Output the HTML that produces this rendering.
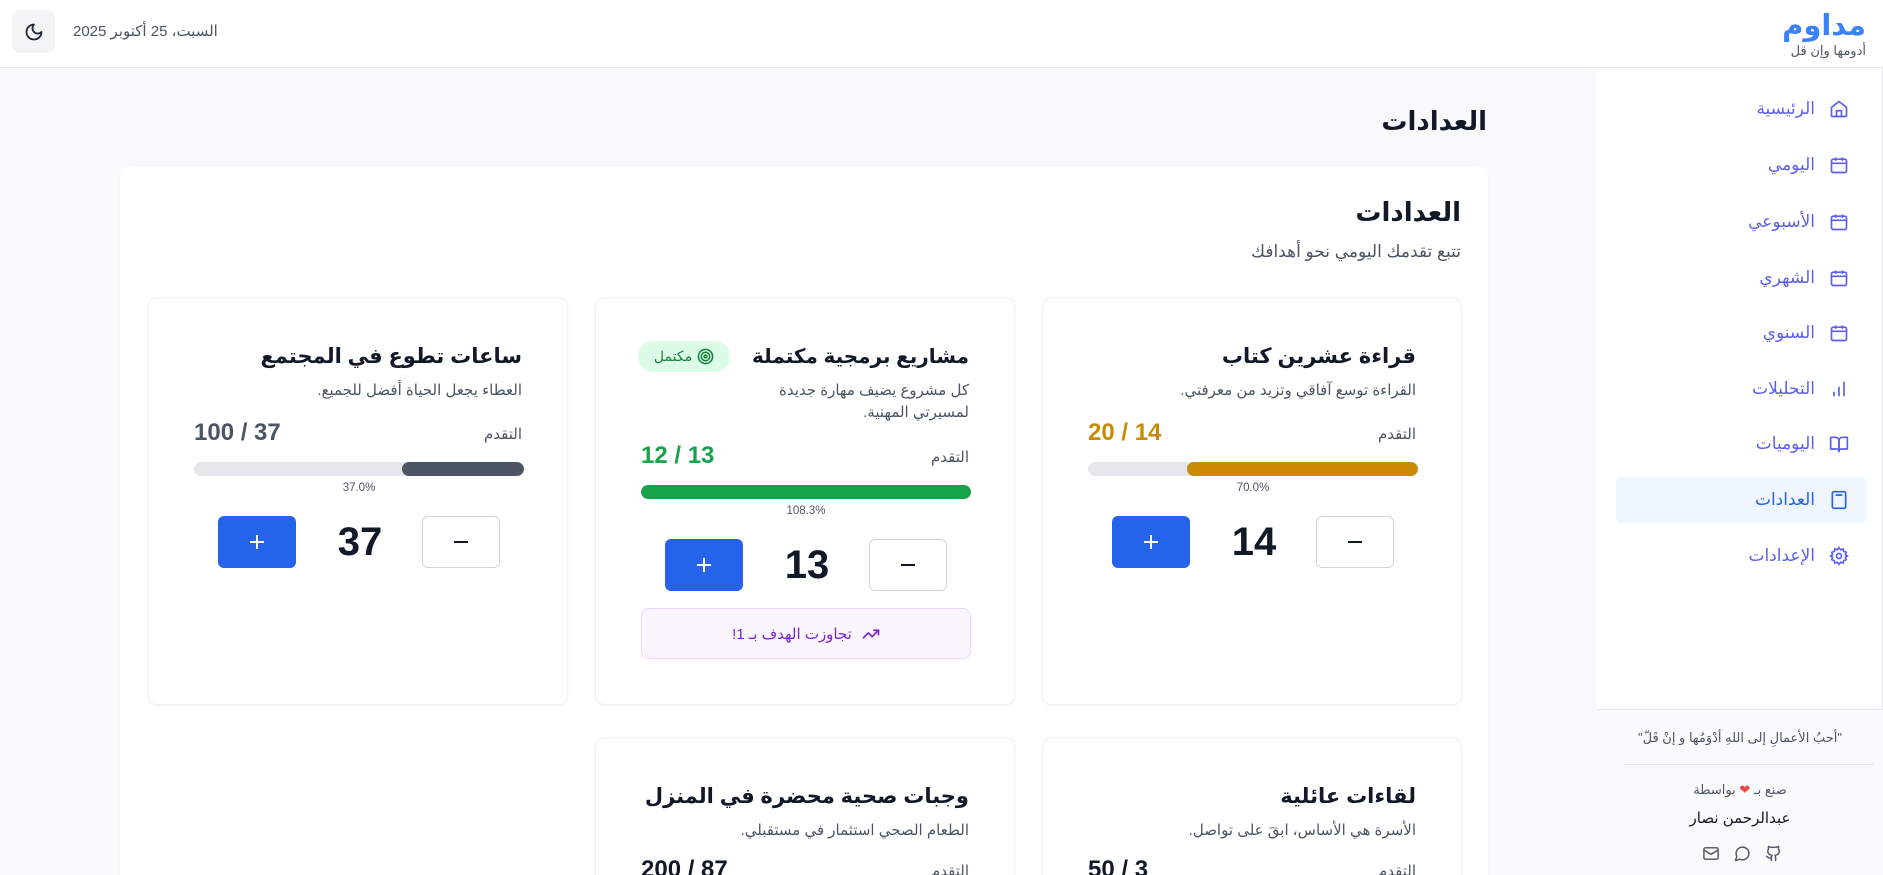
<!DOCTYPE html>
<html lang="ar" dir="rtl"><head><meta charset="utf-8"><style>
*{box-sizing:border-box;margin:0;padding:0}
html,body{width:1883px;height:875px;overflow:hidden}
body{background:#f8f9fb;font-family:"Liberation Sans","DejaVu Sans",sans-serif;color:#111827;position:relative}
.hdr{position:absolute;left:0;top:0;width:1883px;height:68px;background:#fff;border-bottom:1px solid #e5e7eb}
.side{position:absolute;left:1597px;top:68px;width:286px;height:807px;background:#fff;border-right:1px solid #e5e7eb}
.abs{position:absolute}
.nav{position:absolute;left:19px;width:251px;height:46px;border-radius:6px;color:#5b5fef;font-size:17px;display:flex;align-items:center;justify-content:flex-start;padding-right:18px;gap:14px}
.nav svg{width:20px;height:20px;flex:none}
.nav.act{background:#eff6ff;color:#2563eb}
.big{position:absolute;left:120px;top:167px;width:1368px;height:900px;background:#fff;border-radius:12px;box-shadow:0 1px 2px rgba(0,0,0,.04)}
.card{position:absolute;width:420px;height:408px;background:#fff;border:1px solid #f1f2f4;border-radius:10px;box-shadow:0 1px 3px rgba(0,0,0,.05)}
.card .t{position:absolute;right:45px;top:44px;font-size:21px;font-weight:bold;line-height:30px;white-space:nowrap}
.card .d{position:absolute;right:45px;top:82px;font-size:15px;color:#4b5563;line-height:22px;width:330px}
.card .l{position:absolute;right:45px;font-size:15px;color:#4b5563}
.card .v{position:absolute;left:45px;font-size:24px;font-weight:bold;direction:ltr}
.card .bar{position:absolute;left:45px;width:330px;height:14px;border-radius:7px;background:#e5e7eb;overflow:hidden}
.card .bar i{position:absolute;right:0;top:0;bottom:0;border-radius:7px}
.card .p{position:absolute;left:0;width:420px;text-align:center;font-size:11.5px;color:#4b5563}
.btn{position:absolute;width:78px;height:52px;border-radius:6px;display:flex;align-items:center;justify-content:center}
.plus{left:69px;background:#2563eb}
.minus{left:273px;background:#fff;border:1px solid #d1d5db}
.num{position:absolute;left:160px;width:102px;text-align:center;font-size:40px;font-weight:bold;line-height:52px}
</style></head><body>
<div class="hdr">
 <div class="abs" style="left:12px;top:10px;width:43px;height:43px;background:#f3f4f6;border-radius:8px;display:flex;align-items:center;justify-content:center">
  <svg width="20" height="20" viewBox="0 0 24 24" fill="none" stroke="#1f2937" stroke-width="2.2" stroke-linecap="round" stroke-linejoin="round"><path d="M12 3a6 6 0 0 0 9 9 9 9 0 1 1-9-9Z"/></svg>
 </div>
 <div class="abs" style="left:73px;top:22px;font-size:15px;color:#4b5563;white-space:nowrap">السبت، 25 أكتوبر 2025</div>
 <div class="abs" style="right:17px;top:8px;font-size:29px;font-weight:bold;color:#3b82f6;line-height:36px">مداوم</div>
 <div class="abs" style="right:17px;top:43px;font-size:13px;color:#4b5563">أدومها وإن قل</div>
</div>
<div class="abs" style="right:396px;top:106px;font-size:26px;font-weight:bold">العدادات</div>

<div class="big">
 <div class="abs" style="right:27px;top:30px;font-size:26px;font-weight:bold">العدادات</div>
 <div class="abs" style="right:27px;top:75px;font-size:17px;color:#4b5563">تتبع تقدمك اليومي نحو أهدافك</div>
</div>

<!-- card 1 -->
<div class="card" style="left:1042px;top:297px">
 <div class="t">قراءة عشرين كتاب</div>
 <div class="d">القراءة توسع آفاقي وتزيد من معرفتي.</div>
 <div class="l" style="top:127px">التقدم</div>
 <div class="v" style="top:121px;color:#ca8a04">20 / 14</div>
 <div class="bar" style="top:164px"><i style="width:70%;background:#ca8a04"></i></div>
 <div class="p" style="top:184px">70.0%</div>
 <div class="btn plus" style="top:218px"><svg width="18" height="18" viewBox="0 0 18 18" stroke="#fff" stroke-width="2"><path d="M9 2v14M2 9h14"/></svg></div>
 <div class="num" style="top:218px">14</div>
 <div class="btn minus" style="top:218px"><svg width="18" height="18" viewBox="0 0 18 18" stroke="#111827" stroke-width="2"><path d="M2 9h14"/></svg></div>
</div>

<!-- card 2 -->
<div class="card" style="left:595px;top:297px">
 <div class="t" style="font-size:20px">مشاريع برمجية مكتملة</div>
 <div class="abs" style="left:42px;top:43px;width:92px;height:31px;border-radius:16px;background:#dcfce7;color:#15803d;font-size:14px;display:flex;align-items:center;justify-content:center;gap:5px"><svg width="17" height="17" viewBox="0 0 24 24" fill="none" stroke="#15803d" stroke-width="2.2"><circle cx="12" cy="12" r="10"/><circle cx="12" cy="12" r="6"/><circle cx="12" cy="12" r="2"/></svg>مكتمل</div>
 <div class="d" style="width:240px">كل مشروع يضيف مهارة جديدة لمسيرتي المهنية.</div>
 <div class="l" style="top:150px">التقدم</div>
 <div class="v" style="top:144px;color:#16a34a">12 / 13</div>
 <div class="bar" style="top:187px"><i style="width:100%;background:#16a34a"></i></div>
 <div class="p" style="top:207px">108.3%</div>
 <div class="btn plus" style="top:241px"><svg width="18" height="18" viewBox="0 0 18 18" stroke="#fff" stroke-width="2"><path d="M9 2v14M2 9h14"/></svg></div>
 <div class="num" style="top:241px">13</div>
 <div class="btn minus" style="top:241px"><svg width="18" height="18" viewBox="0 0 18 18" stroke="#111827" stroke-width="2"><path d="M2 9h14"/></svg></div>
 <div class="abs" style="left:45px;top:310px;width:330px;height:51px;border-radius:8px;background:#faf5ff;border:1px solid #e9d5ff;color:#7e22ce;font-size:15px;display:flex;align-items:center;justify-content:center;gap:10px"><svg width="18" height="18" viewBox="0 0 24 24" fill="none" stroke="#7e22ce" stroke-width="2.2" stroke-linecap="round" stroke-linejoin="round"><path d="M22 7l-8.5 8.5-5-5L2 17"/><path d="M16 7h6v6"/></svg>تجاوزت الهدف بـ 1!</div>
</div>

<!-- card 3 -->
<div class="card" style="left:148px;top:297px">
 <div class="t">ساعات تطوع في المجتمع</div>
 <div class="d">العطاء يجعل الحياة أفضل للجميع.</div>
 <div class="l" style="top:127px">التقدم</div>
 <div class="v" style="top:121px;color:#4b5563">100 / 37</div>
 <div class="bar" style="top:164px"><i style="width:37%;background:#4b5563"></i></div>
 <div class="p" style="top:184px">37.0%</div>
 <div class="btn plus" style="top:218px"><svg width="18" height="18" viewBox="0 0 18 18" stroke="#fff" stroke-width="2"><path d="M9 2v14M2 9h14"/></svg></div>
 <div class="num" style="top:218px">37</div>
 <div class="btn minus" style="top:218px"><svg width="18" height="18" viewBox="0 0 18 18" stroke="#111827" stroke-width="2"><path d="M2 9h14"/></svg></div>
</div>

<!-- row 2 -->
<div class="card" style="left:1042px;top:737px">
 <div class="t">لقاءات عائلية</div>
 <div class="d">الأسرة هي الأساس، ابقَ على تواصل.</div>
 <div class="l" style="top:124px">التقدم</div>
 <div class="v" style="top:118px;color:#111827">50 / 3</div>
</div>
<div class="card" style="left:595px;top:737px">
 <div class="t">وجبات صحية محضرة في المنزل</div>
 <div class="d">الطعام الصحي استثمار في مستقبلي.</div>
 <div class="l" style="top:124px">التقدم</div>
 <div class="v" style="top:118px;color:#111827">200 / 87</div>
</div>

<div class="side">
 <div class="nav" style="top:18px"><svg viewBox="0 0 24 24" fill="none" stroke="currentColor" stroke-width="2" stroke-linejoin="round"><path d="M3 10l9-7 9 7v10a1 1 0 0 1-1 1H4a1 1 0 0 1-1-1Z"/><path d="M9 21v-7h6v7"/></svg>الرئيسية</div>
 <div class="nav" style="top:74px"><svg viewBox="0 0 24 24" fill="none" stroke="currentColor" stroke-width="2"><rect x="3" y="5" width="18" height="16" rx="2"/><path d="M3 10h18M8 3v4M16 3v4"/></svg>اليومي</div>
 <div class="nav" style="top:131px"><svg viewBox="0 0 24 24" fill="none" stroke="currentColor" stroke-width="2"><rect x="3" y="5" width="18" height="16" rx="2"/><path d="M3 10h18M8 3v4M16 3v4"/></svg>الأسبوعي</div>
 <div class="nav" style="top:187px"><svg viewBox="0 0 24 24" fill="none" stroke="currentColor" stroke-width="2"><rect x="3" y="5" width="18" height="16" rx="2"/><path d="M3 10h18M8 3v4M16 3v4"/></svg>الشهري</div>
 <div class="nav" style="top:242px"><svg viewBox="0 0 24 24" fill="none" stroke="currentColor" stroke-width="2"><rect x="3" y="5" width="18" height="16" rx="2"/><path d="M3 10h18M8 3v4M16 3v4"/></svg>السنوي</div>
 <div class="nav" style="top:298px"><svg viewBox="0 0 24 24" fill="none" stroke="currentColor" stroke-width="2" stroke-linecap="round"><path d="M6 20v-4M12 20V10M18 20V4"/></svg>التحليلات</div>
 <div class="nav" style="top:353px"><svg viewBox="0 0 24 24" fill="none" stroke="currentColor" stroke-width="2" stroke-linejoin="round"><path d="M2 4h6a4 4 0 0 1 4 4v13a3 3 0 0 0-3-3H2Z"/><path d="M22 4h-6a4 4 0 0 0-4 4v13a3 3 0 0 1 3-3h7Z"/></svg>اليوميات</div>
 <div class="nav act" style="top:409px"><svg viewBox="0 0 24 24" fill="none" stroke="currentColor" stroke-width="2"><rect x="4" y="2" width="16" height="20" rx="2"/><path d="M8 6h8M8 11h.01M12 11h.01M16 11h.01M8 15h.01M12 15h.01M16 15h.01M8 18h.01M12 18h.01M16 18h.01"/></svg>العدادات</div>
 <div class="nav" style="top:465px"><svg viewBox="0 0 24 24" fill="none" stroke="currentColor" stroke-width="2"><circle cx="12" cy="12" r="3"/><path d="M12 2l2 2.5 3-1 .7 3.1 3 .9-1 3L22 12l-2.3 1.5 1 3-3 .9-.7 3.1-3-1L12 22l-2-2.5-3 1-.7-3.1-3-.9 1-3L2 12l2.3-1.5-1-3 3-.9.7-3.1 3 1Z"/></svg>الإعدادات</div>
 <div class="abs" style="left:0;top:641px;width:286px;height:166px;background:#f9fafb;border-top:1px solid #e5e7eb">
  <div class="abs" style="left:0;width:286px;top:20px;text-align:center;font-size:13px;color:#4b5563">"أحبُ الأعمالِ إلى اللهِ أدْوَمُها و إنْ قَلّ"</div>
  <div class="abs" style="left:26px;width:251px;top:54px;border-top:1px solid #e5e7eb"></div>
  <div class="abs" style="left:0;width:286px;top:72px;text-align:center;font-size:13px;color:#4b5563">صنع بـ <span style="color:#ef4444">❤</span> بواسطة</div>
  <div class="abs" style="left:0;width:286px;top:99px;text-align:center;font-size:15px;color:#111827">عبدالرحمن نصار</div>
  <div class="abs" style="left:105px;top:135px;display:flex;gap:14px">
   <svg width="17" height="17" viewBox="0 0 24 24" fill="none" stroke="#4b5563" stroke-width="2" stroke-linecap="round" stroke-linejoin="round"><path d="M15 22v-4a4.8 4.8 0 0 0-1-3.5c3 0 6-2 6-5.5.08-1.25-.27-2.480-1-3.5.28-1.15.28-2.35 0-3.5 0 0-1 0-3 1.5-2.64-.5-5.36-.5-8 0C6 2 5 2 5 2c-.3 1.15-.3 2.35 0 3.5A5.4 5.4 0 0 0 4 9c0 3.5 3 5.5 6 5.5-.39.49-.68 1.050-.85 1.650S8.93 17.38 9 18v4"/><path d="M9 18c-4.51 2-5-2-7-2"/></svg>
   <svg width="17" height="17" viewBox="0 0 24 24" fill="none" stroke="#4b5563" stroke-width="2" stroke-linejoin="round"><path d="M7.9 20A9 9 0 1 0 4 16.1L2 22Z"/></svg>
   <svg width="18" height="17" viewBox="0 0 24 24" fill="none" stroke="#4b5563" stroke-width="2" stroke-linejoin="round"><rect x="2" y="4" width="20" height="16" rx="2"/><path d="M22 7l-10 6L2 7"/></svg>
  </div>
 </div>
</div>
</body></html>
